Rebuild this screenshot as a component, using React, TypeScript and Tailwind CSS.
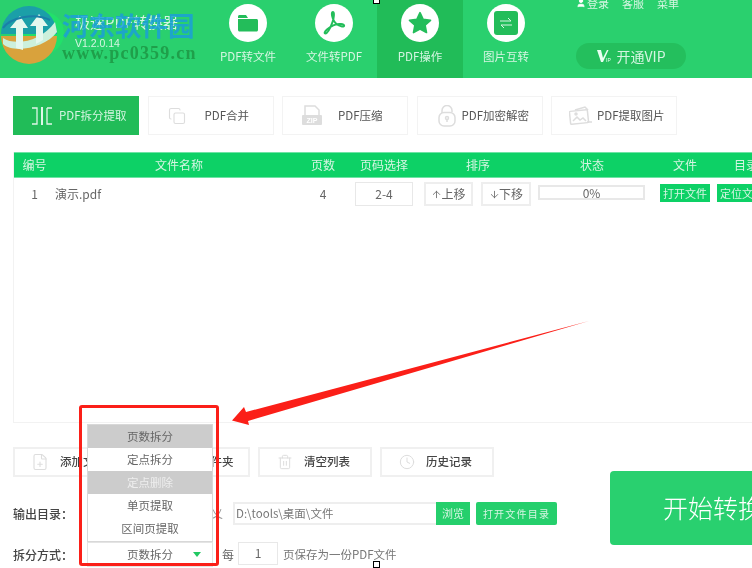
import React from "react";
import { Copy, FilePlus, Trash2, Clock, User, FolderPlus, ArrowUp, ArrowDown } from "lucide-react";

const Circle = ({ children }: { children: React.ReactNode }) => (
  <div className="w-[38px] h-[38px] rounded-full bg-white flex items-center justify-center">{children}</div>
);

const Folder = () => (
  <svg width="22" height="20" viewBox="0 0 22 20">
    <path d="M1 5V3.5C1 2.7 1.7 2 2.5 2H9l2 3z" fill="#23bd5a" />
    <path d="M1 6h18.5c.8 0 1.5.7 1.5 1.5V17c0 .8-.7 1.5-1.5 1.5h-17C1.700 18.500 1 17.800 1 17z" fill="#23bd5a" />
  </svg>
);

const Acrobat = () => (
  <svg width="26" height="28" viewBox="0 0 26 28" fill="none" stroke="#23bd5a" strokeWidth="2">
    <path d="M12 3c-1.500 0-1.500 3 0 7 1.500 4 4 6.500 9 7.500 3 .5 3-2-1-2.500-5-.5-10 2-14 5.500-2.500 2.500-3 4-1.500 4 2 0 5-6 7-11.500C13 9 13.500 3 12 3z" />
  </svg>
);

const Star = () => (
  <svg width="26" height="26" viewBox="0 0 24 24">
    <path
      d="M12 2.500l2.900 6.200 6.800.8-5 4.600 1.300 6.700-6-3.300-6 3.300 1.300-6.700-5-4.600 6.800-.8z"
      fill="#23bd5a"
      stroke="#23bd5a"
      strokeWidth="1.500"
      strokeLinejoin="round"
    />
  </svg>
);

const Swap = () => (
  <div className="w-[24px] h-[24px] rounded-[3px] bg-[#23bd5a] flex items-center justify-center">
    <svg width="14" height="12" viewBox="0 0 14 12" fill="none" stroke="#d8f5e3" strokeWidth="1">
      <path d="M1 4h11L9 1M13 8H2l3 3" />
    </svg>
  </div>
);

const NavTab = ({ icon, label, active }: { icon: React.ReactNode; label: string; active?: boolean }) => (
  <div className={`w-[86px] h-[78px] flex flex-col items-center pt-[4px] ${active ? "bg-[#21bc58]" : ""}`}>
    <Circle>{icon}</Circle>
    <div className="mt-[4px] text-[11.500px] leading-[20px] text-[#d5f5e2]">{label}</div>
  </div>
);

const SplitIcon = () => (
  <svg width="20" height="18" viewBox="0 0 20 18" fill="none" stroke="#dff6e8" strokeWidth="1.300">
    <path d="M0 1h5v16H0M15 1h5M15 1v16h5" />
    <path d="M10 0v18" strokeWidth="2" />
  </svg>
);

const Zip = () => (
  <svg width="20" height="22" viewBox="0 0 20 22">
    <path d="M3 1h10l4 4v6H3z" fill="none" stroke="#dddddd" strokeWidth="1.500" />
    <rect x="0" y="10" width="20" height="10" rx="1" fill="#dddddd" />
    <text x="10" y="18" textAnchor="middle" fontSize="7" fontWeight="700" fill="#ffffff" fontFamily="Liberation Sans, sans-serif">ZIP</text>
  </svg>
);

const Lock = () => (
  <svg width="18" height="22" viewBox="0 0 18 22" fill="none" stroke="#dddddd" strokeWidth="1.500">
    <path d="M4 8V5.500a5 5 0 0 1 10 0V7" />
    <rect x="1" y="7.500" width="16" height="13.500" rx="5" />
    <circle cx="9" cy="13" r="1.500" />
    <path d="M9 14.500V17" />
  </svg>
);

const Pics = () => (
  <svg width="24" height="20" viewBox="0 0 24 20" fill="none" stroke="#dddddd" strokeWidth="1.500">
    <path d="M6 4l10-3 3 3" />
    <rect x="1" y="4.500" width="18" height="13" rx="1" transform="rotate(-6 10 11)" />
    <path d="M4 15l4-4 3 3 3-2 3 3" />
    <circle cx="7" cy="8" r="1" />
    <path d="M18 16h5" />
  </svg>
);

const SubTab = ({ icon, label, active, className }: { icon: React.ReactNode; label: string; active?: boolean; className: string }) => (
  <div
    className={`w-[126px] h-[39px] flex items-center whitespace-nowrap text-[11.500px] border ${className} ${
      active ? "bg-[#21bc58] border-[#21bc58] text-[#d5f5e2]" : "bg-white border-[#f3f3f3] text-[#555555]"
    }`}
  >
    {icon}
    <span>{label}</span>
  </div>
);

const Cell = ({ w, children, className = "" }: { w: string; children: React.ReactNode; className?: string }) => (
  <div className={`${w} shrink-0 flex items-center justify-center ${className}`}>{children}</div>
);

const ToolBtn = ({ icon, label, w = "w-[114px]", className }: { icon: React.ReactNode; label: string; w?: string; className: string }) => (
  <div className={`${w} h-[30px] border-2 border-[#f0f0f0] flex items-center whitespace-nowrap text-[11.500px] font-medium text-[#444444] ${className}`}>
    {icon}
    <span>{label}</span>
  </div>
);

const MenuItem = ({ label, tone }: { label: string; tone: "sel" | "dim" | "plain" }) => (
  <div
    className={`h-[23px] flex items-center justify-center text-[11.500px] ${
      tone === "sel" ? "bg-[#cccccc] text-[#666666]" : tone === "dim" ? "bg-[#cccccc] text-[#eeeeee]" : "bg-white text-[#666666]"
    }`}
  >
    {label}
  </div>
);

export default function App() {
  return (
    <div
      className="relative w-[752px] h-[568px] overflow-hidden bg-white blur-[0.4px]"
      style={{ fontFamily: '"Noto Sans CJK SC", "Liberation Sans", sans-serif' }}
    >
      {/* header */}
      <div className="h-[78px] bg-[#2ad06e] flex">
        <div className="w-[205px] shrink-0 pl-[75px] pt-[12px] text-[#d5f5e2]">
          <div className="text-[15px] leading-[20px] whitespace-nowrap">极速PDF转换器</div>
          <div className="mt-[4px] text-[10.500px] leading-[14px]" style={{ fontFamily: '"Liberation Sans", sans-serif' }}>V1.2.0.14</div>
        </div>
        <NavTab icon={<Folder />} label="PDF转文件" />
        <NavTab icon={<Acrobat />} label="文件转PDF" />
        <NavTab icon={<Star />} label="PDF操作" active />
        <NavTab icon={<Swap />} label="图片互转" />
        <div className="flex-1 pl-[27px] relative">
          <div className="flex items-center h-[8px] text-[11px] text-[#d5f5e2] -mt-[1px] gap-[13px]">
            <span className="flex items-center gap-[1px]">
              <User size={10} fill="#ffffff" stroke="#ffffff" />
              登录
            </span>
            <span>客服</span>
            <span>菜单</span>
          </div>
          <div className="mt-[36px] w-[110px] h-[26px] rounded-full bg-[#24bf5d] flex items-center justify-center gap-[4px] text-white">
            <svg width="16" height="16" viewBox="0 0 16 16">
              <path d="M1 2h4l2 8 4-8h1.500L7 14H5z" fill="#e8fff1" />
              <text x="10" y="14" fontSize="5" fill="#e8fff1" fontFamily="Liberation Sans, sans-serif">IP</text>
            </svg>
            <span className="text-[14px] leading-none text-[#d5f5e2]">开通VIP</span>
          </div>
        </div>
      </div>

      {/* sub tabs */}
      <div className="mt-[18px] ml-[13px] flex gap-[8.500px]">
        <SubTab icon={<SplitIcon />} label="PDF拆分提取" active className="pl-[18px] gap-[7px]" />
        <SubTab icon={<Copy size={18} color="#dddddd" strokeWidth={1.500} />} label="PDF合并" className="pl-[19px] gap-[19px]" />
        <SubTab icon={<Zip />} label="PDF压缩" className="pl-[19px] gap-[16px]" />
        <SubTab icon={<Lock />} label="PDF加密解密" className="pl-[20px] gap-[6px]" />
        <SubTab icon={<Pics />} label="PDF提取图片" className="pl-[17px] gap-[4px]" />
      </div>

      {/* table */}
      <div className="mt-[17px] ml-[13px] w-[762px] h-[271px] border-l border-b border-[#f2f2f2]">
        <div className="h-[26px] bg-[#0dd166] flex text-[12px] text-[#d5f5e2] border-t border-b border-[#6fe3a5]">
          <Cell w="w-[41px]">编号</Cell>
          <Cell w="w-[248px]">文件名称</Cell>
          <Cell w="w-[40px]">页数</Cell>
          <Cell w="w-[82px]">页码选择</Cell>
          <Cell w="w-[106px]">排序</Cell>
          <Cell w="w-[122px]">状态</Cell>
          <Cell w="w-[64px]">文件</Cell>
          <Cell w="w-[58px]">目录</Cell>
        </div>
        <div className="h-[32px] flex text-[12px] text-[#666666]">
          <Cell w="w-[41px]">1</Cell>
          <Cell w="w-[248px]" className="justify-start">演示.pdf</Cell>
          <Cell w="w-[40px]">4</Cell>
          <Cell w="w-[82px]">
            <div className="w-[58px] h-[24px] border border-[#e8e8e8] flex items-center justify-center">2-4</div>
          </Cell>
          <Cell w="w-[106px]" className="gap-[8px] pr-[1px]">
            <div className="w-[49px] h-[24px] shrink-0 border-2 border-[#eeeeee] flex items-center justify-center">
              <ArrowUp size={11} strokeWidth={1.800} className="-mr-[1px]" />上移
            </div>
            <div className="w-[50px] h-[24px] shrink-0 border-2 border-[#eeeeee] flex items-center justify-center">
              <ArrowDown size={11} strokeWidth={1.800} className="-mr-[1px]" />下移
            </div>
          </Cell>
          <Cell w="w-[122px]" className="pr-[1px]">
            <div className="w-[107px] h-[15px] mb-[3px] border-2 border-[#e8e8e8] flex items-center justify-center">0%</div>
          </Cell>
          <Cell w="w-[64px]">
            <div className="w-[50px] h-[18px] mb-[2px] bg-[#0dd166] text-[#d5f5e2] text-[11px] flex items-center justify-center">打开文件</div>
          </Cell>
          <Cell w="w-[58px]" className="justify-start">
            <div className="w-[50px] h-[18px] mb-[2px] bg-[#0dd166] text-[#d5f5e2] text-[11px] flex items-center justify-center whitespace-nowrap">定位文件</div>
          </Cell>
        </div>
      </div>

      {/* bottom */}
      <div className="flex">
        <div className="w-[610px] shrink-0 pl-[13px]">
          <div className="mt-[24px] flex gap-[8px]">
            <ToolBtn icon={<FilePlus size={18} color="#dddddd" strokeWidth={1.500} />} label="添加文件" w="w-[115px]" className="pl-[16px] gap-[11px]" />
            <ToolBtn icon={<FolderPlus size={18} color="#dddddd" strokeWidth={1.500} />} label="添加文件夹" className="pl-[16px] gap-[4px]" />
            <ToolBtn icon={<Trash2 size={16} color="#dddddd" strokeWidth={1.500} />} label="清空列表" className="pl-[17px] gap-[11px]" />
            <ToolBtn icon={<Clock size={16} color="#dddddd" strokeWidth={1.500} />} label="历史记录" className="pl-[17px] gap-[11px]" />
          </div>

          <div className="mt-[25px] flex items-center h-[23px] text-[12px]">
            <div className="w-[210px] shrink-0 flex justify-between">
              <span className="font-medium text-[#444444]">输出目录：</span>
              <span className="text-[#999999]">自定义</span>
            </div>
            <div className="ml-[10px] w-[203px] h-[23px] border-2 border-[#eeeeee] border-r-0 flex items-center pl-[1px] text-[#777777] text-[11.500px]">
              D:\tools\桌面\文件
            </div>
            <div className="w-[34px] h-[23px] bg-[#25cf6c] text-[#d5f5e2] text-[11px] flex items-center justify-center">浏览</div>
            <div className="ml-[6px] w-[81px] h-[23px] rounded-[2px] bg-[#25cf6c] text-[#d5f5e2] text-[10px] tracking-[1.200px] flex items-center justify-center whitespace-nowrap">打开文件目录</div>
          </div>

          <div className="mt-[17px] flex items-center h-[25px] text-[12px]">
            <span className="w-[74px] shrink-0 font-medium text-[#444444]">拆分方式：</span>
            <div className="relative w-[126px] h-[25px] shrink-0 border border-[#e4e4e4] flex items-center justify-center text-[#666666] text-[11.500px]">
              页数拆分
              <span className="absolute right-[11px] top-[9px] w-0 h-0 border-l-[4px] border-r-[4px] border-t-[5px] border-l-transparent border-r-transparent border-t-[#22c862]" />
              <div className="absolute left-[-1px] bottom-[24px] w-[126px] h-[118px] border border-[#d8d8d8] bg-white">
                <MenuItem label="页数拆分" tone="sel" />
                <MenuItem label="定点拆分" tone="plain" />
                <MenuItem label="定点删除" tone="dim" />
                <MenuItem label="单页提取" tone="plain" />
                <MenuItem label="区间页提取" tone="plain" />
              </div>
            </div>
            <span className="ml-[9px] text-[#666666]">每</span>
            <div className="ml-[4px] w-[40px] h-[23px] mb-[3px] border border-[#e8e8e8] flex items-center justify-center text-[#666666]">1</div>
            <span className="ml-[5px] text-[#777777] text-[11.500px] whitespace-nowrap">页保存为一份PDF文件</span>
          </div>
        </div>
        <div className="pt-[48px]">
          <div className="w-[180px] h-[74px] rounded-[4px] bg-[#29d06f] text-white text-[25px] font-light flex items-center pl-[53px] whitespace-nowrap">开始转换</div>
        </div>
      </div>

      {/* watermark logo */}
      <svg className="absolute left-0 top-[4px]" width="66" height="60" viewBox="0 0 66 60">
        <circle cx="42" cy="29" r="22" fill="#22e06a" />
        <path d="M1 30a28 28 0 0 1 56 0z" fill="#1b9fa8" />
        <path d="M1 32a28 28 0 0 0 56 0z" fill="#d9a23c" />
        <path d="M3 34c12 8 38 4 52-16l2 10C45 44 14 50 3 40z" fill="#ccf0dc" />
        <path d="M16 44V24h-6l10-12 8 12h-5v22zM36 40V22h-6l9-12 9 12h-5v14z" fill="#e4f8ee" />
        <path d="M3 24C10 14 34 8 50 16" fill="none" stroke="#1a7fa8" strokeWidth="2" />
      </svg>

      {/* watermark text */}
      <div className="absolute left-[62px] top-[7px] font-bold text-[26.500px] leading-[36px] text-[#1b9fd8]/85 whitespace-nowrap" style={{ fontFamily: '"Noto Sans CJK SC", serif' }}>
        河东软件园
      </div>
      <div className="absolute left-[62px] top-[42px] font-bold text-[18px] leading-[22px] text-[#1f9f4a] tracking-[1.200px] whitespace-nowrap" style={{ fontFamily: '"Liberation Serif", serif' }}>
        www.pc0359.cn
      </div>

      {/* annotation rectangle */}
      <div className="absolute left-[79px] top-[405px] w-[140px] h-[161px] border-[3px] border-[#fb1f18] rounded-[3px]" />

      {/* annotation arrow */}
      <svg className="absolute left-0 top-0 pointer-events-none" width="752" height="568" viewBox="0 0 752 568">
        <polygon points="589,321 246,412 244,407 232,420.500 249,425 248,421" fill="#fb1f18" />
      </svg>

      {/* selection handles */}
      <div className="absolute left-[373px] -top-[3px] w-[7px] h-[7px] bg-white border border-black" />
      <div className="absolute left-[373px] top-[561px] w-[7px] h-[7px] bg-white border border-black" />
    </div>
  );
}
